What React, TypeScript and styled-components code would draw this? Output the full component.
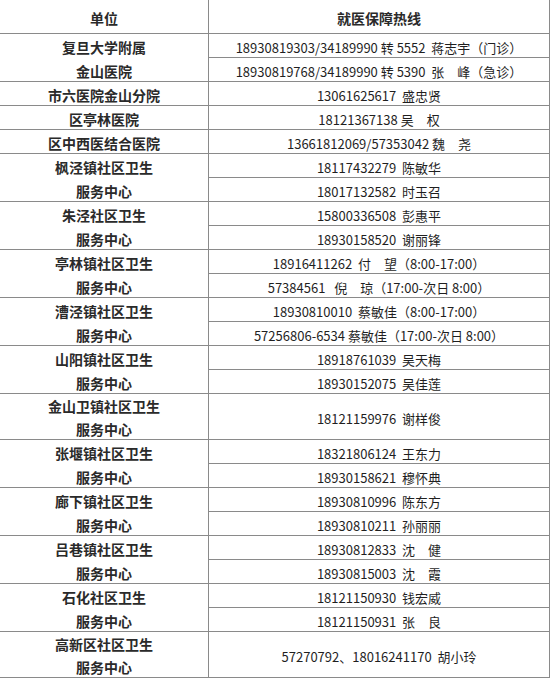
import styled, { createGlobalStyle } from 'styled-components'

const GlobalStyle = createGlobalStyle`
  body {
    margin: 0;
    background: #ffffff;
  }
`

type Group = {
  unit: string[]
  lines: string[]
  tall?: boolean
}

const groups: Group[] = [
  {
    unit: ['复旦大学附属', '金山医院'],
    lines: [
      '18930819303/34189990 转 5552  蒋志宇（门诊）',
      '18930819768/34189990 转 5390  张　峰（急诊）',
    ],
  },
  { unit: ['市六医院金山分院'], lines: ['13061625617  盛忠贤'] },
  { unit: ['区亭林医院'], lines: ['18121367138 吴　权'] },
  { unit: ['区中西医结合医院'], lines: ['13661812069/57353042 魏　尧'] },
  { unit: ['枫泾镇社区卫生', '服务中心'], lines: ['18117432279  陈敏华', '18017132582  时玉召'] },
  { unit: ['朱泾社区卫生', '服务中心'], lines: ['15800336508  彭惠平', '18930158520  谢丽锋'] },
  {
    unit: ['亭林镇社区卫生', '服务中心'],
    lines: ['18916411262  付　望（8:00-17:00）', '57384561   倪　琼（17:00-次日 8:00）'],
  },
  {
    unit: ['漕泾镇社区卫生', '服务中心'],
    lines: ['18930810010  蔡敏佳（8:00-17:00）', '57256806-6534 蔡敏佳（17:00-次日 8:00）'],
  },
  { unit: ['山阳镇社区卫生', '服务中心'], lines: ['18918761039  吴天梅', '18930152075  吴佳莲'] },
  { unit: ['金山卫镇社区卫生', '服务中心'], lines: ['18121159976  谢样俊'], tall: true },
  { unit: ['张堰镇社区卫生', '服务中心'], lines: ['18321806124  王东力', '18930158621  穆怀典'] },
  { unit: ['廊下镇社区卫生', '服务中心'], lines: ['18930810996  陈东方', '18930810211  孙丽丽'] },
  { unit: ['吕巷镇社区卫生', '服务中心'], lines: ['18930812833  沈　健', '18930815003  沈　霞'] },
  { unit: ['石化社区卫生', '服务中心'], lines: ['18121150930  钱宏威', '18121150931  张　良'] },
  { unit: ['高新区社区卫生', '服务中心'], lines: ['57270792、18016241170  胡小玲'], tall: true },
]

const LINE = '#8a8a8a'

const Table = styled.div`
  width: 550px;
  font-family: "Noto Sans CJK SC", "Noto Sans", sans-serif;
  color: #1f1f1f;
`

const Row = styled.div<{ $h: number }>`
  display: flex;
  height: ${({ $h }) => $h}px;
  border-bottom: 1px solid ${LINE};
`

const UnitCell = styled.div`
  width: 209px;
  flex: none;
  display: flex;
  flex-direction: column;
  justify-content: center;
  align-items: center;
  padding-top: 3px;
  box-sizing: border-box;
  border-right: 1px solid ${LINE};
  font-size: 14px;
  font-weight: 700;
  color: #2a2a2a;
`

const UnitLine = styled.div<{ $tall?: boolean }>`
  line-height: ${({ $tall }) => ($tall ? '23px' : '24px')};
  white-space: nowrap;
`

const PhoneCell = styled.div`
  flex: 1;
  display: flex;
  flex-direction: column;
  border-right: 1px solid ${LINE};
  font-size: 13px;
`

const PhoneLine = styled.div`
  flex: 1;
  display: flex;
  align-items: center;
  justify-content: center;
  padding-top: 3px;
  white-space: pre;

  & + & {
    border-top: 1px solid ${LINE};
  }
`

const HeaderCell = styled.div<{ $left?: boolean }>`
  display: flex;
  align-items: center;
  justify-content: center;
  padding-top: 2px;
  font-size: 14px;
  font-weight: 700;
  color: #2a2a2a;
  border-right: 1px solid ${LINE};
  ${({ $left }) => ($left ? 'width: 209px; flex: none; box-sizing: border-box;' : 'flex: 1;')}
`

const heightOf = (g: Group) => (g.tall ? 45 : g.lines.length * 24 - 1)

export default function App() {
  return (
    <>
      <GlobalStyle />
      <Table>
        <Row $h={33}>
          <HeaderCell $left>单位</HeaderCell>
          <HeaderCell>就医保障热线</HeaderCell>
        </Row>
        {groups.map((g) => (
          <Row key={g.unit.join('')} $h={heightOf(g)}>
            <UnitCell>
              {g.unit.map((u) => (
                <UnitLine key={u} $tall={g.tall}>
                  {u}
                </UnitLine>
              ))}
            </UnitCell>
            <PhoneCell>
              {g.lines.map((l) => (
                <PhoneLine key={l}>{l}</PhoneLine>
              ))}
            </PhoneCell>
          </Row>
        ))}
      </Table>
    </>
  )
}
